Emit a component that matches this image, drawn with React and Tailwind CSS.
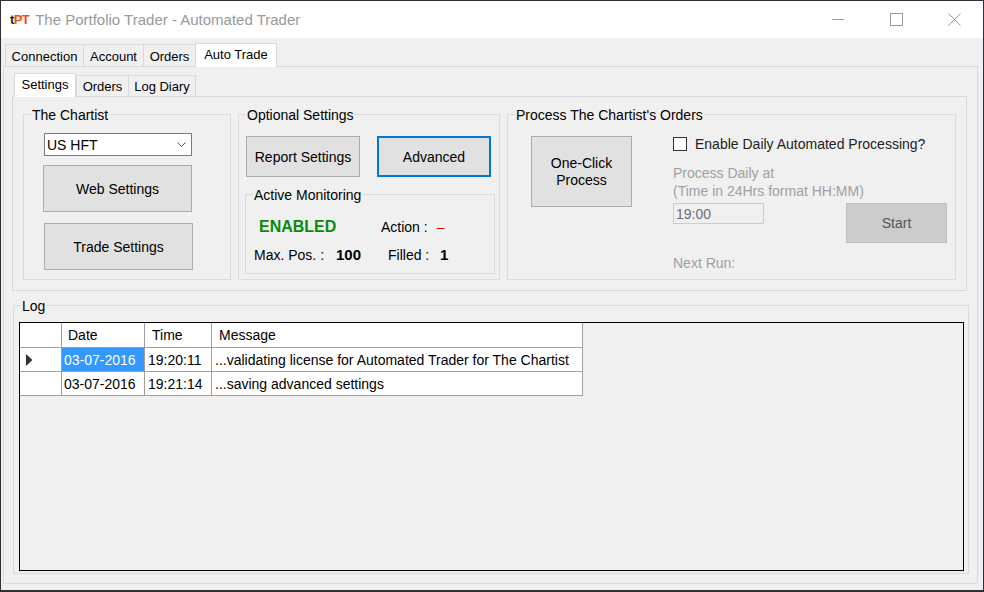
import React from 'react';

const GroupBox = ({ label, className = '', children }) => (
  <div className={`relative border border-[#dcdcdc] ${className}`}>
    <span className="absolute -top-[8px] left-[7px] bg-[#f0f0f0] px-[1px] leading-[16px] whitespace-nowrap">
      {label}
    </span>
    {children}
  </div>
);

const Button = ({ focused = false, className = '', children }) => (
  <div
    className={`flex items-center justify-center text-center leading-[17px] bg-[#e1e1e1] ${
      focused ? 'border-2 border-[#0078d7]' : 'border border-[#adadad]'
    } ${className}`}
  >
    {children}
  </div>
);

const TabStrip = ({ tabs, active, selectedH, normalH, className = '' }) => (
  <div className={`flex items-end text-[13px] ${className}`}>
    {tabs.map((tab) =>
      tab.label === active ? (
        <div
          key={tab.label}
          style={{ width: tab.w }}
          className={`relative z-10 -mb-px flex items-start justify-center pt-[3px] bg-white border border-b-0 border-[#d9d9d9] ${selectedH}`}
        >
          {tab.label}
        </div>
      ) : (
        <div
          key={tab.label}
          style={{ width: tab.w }}
          className={`flex items-center justify-center pt-[2px] bg-[#f0f0f0] border border-b-0 border-[#d9d9d9] -mr-px ${normalH}`}
        >
          {tab.label}
        </div>
      )
    )}
  </div>
);

const outerTabs = [
  { label: 'Connection', w: 79 },
  { label: 'Account', w: 61 },
  { label: 'Orders', w: 53 },
  { label: 'Auto Trade', w: 82 },
];

const innerTabs = [
  { label: 'Settings', w: 62 },
  { label: 'Orders', w: 53 },
  { label: 'Log Diary', w: 68 },
];

const logRows = [
  { date: '03-07-2016', time: '19:20:11', message: '...validating license for Automated Trader for The Chartist', current: true },
  { date: '03-07-2016', time: '19:21:14', message: '...saving advanced settings', current: false },
];

const cell = 'h-[24px] flex items-center border-r border-b border-[#a0a0a0] whitespace-nowrap overflow-hidden';

export default function App() {
  return (
    <div className="w-[984px] h-[592px] bg-[#2e2e33] pt-px px-px pb-[2px] font-['Liberation_Sans',Arial,sans-serif] text-[14px] leading-[16px] text-black">
      <div className="h-full flex flex-col bg-[#f0f0f0]">
        {/* title bar */}
        <div className="h-[37px] shrink-0 flex items-center bg-white">
          <div className="pl-[9px] text-[13px] font-bold tracking-[-0.6px]">
            <span className="text-[#222]">t</span>
            <span className="text-[#f0500a]">PT</span>
          </div>
          <div className="ml-[6px] text-[15px] text-[#999]">The Portfolio Trader - Automated Trader</div>
          <div className="ml-auto flex h-full">
            <div className="w-[58px] flex items-center justify-center">
              <svg width="12" height="12" viewBox="0 0 12 12">
                <path d="M0 5.5h12" stroke="#999" strokeWidth="1" />
              </svg>
            </div>
            <div className="w-[58px] flex items-center justify-center">
              <svg width="13" height="13" viewBox="0 0 13 13">
                <rect x="0.5" y="0.5" width="12" height="12" fill="none" stroke="#999" strokeWidth="1" />
              </svg>
            </div>
            <div className="w-[58px] flex items-center justify-center">
              <svg width="13" height="13" viewBox="0 0 13 13">
                <path d="M0.5 0.5L12.5 12.5M12.5 0.5L0.5 12.5" stroke="#999" strokeWidth="1" />
              </svg>
            </div>
          </div>
        </div>

        {/* outer tabs */}
        <div className="pl-[2px] pr-[5px] pt-[5px]">
          <TabStrip tabs={outerTabs} active="Auto Trade" selectedH="h-[24px]" normalH="h-[22px]" className="pl-[2px]" />
          <div className="h-[518px] flex flex-col border border-[#d9d9d9]">
            {/* inner tabs */}
            <TabStrip
              tabs={innerTabs}
              active="Settings"
              selectedH="h-[24px]"
              normalH="h-[21px]"
              className="pt-[6px] pl-[10px]"
            />
            <div className="ml-[8px] mr-[10px] h-[195px] border border-[#d9d9d9] flex gap-[7px] pt-[17px] px-[10px] pb-[10px]">
              {/* The Chartist */}
              <GroupBox label="The Chartist" className="w-[208px] flex flex-col">
                <div className="ml-[20px] mt-[18px] w-[148px] h-[23px] flex items-center justify-between bg-white border border-[#7a7a7a] pl-[2px] pr-[5px]">
                  <span>US HFT</span>
                  <svg width="9" height="6" viewBox="0 0 9 6">
                    <path d="M0.5 0.5L4.5 4.5L8.5 0.5" fill="none" stroke="#555" strokeWidth="1" />
                  </svg>
                </div>
                <Button className="ml-[19px] mt-[9px] w-[149px] h-[47px] pt-px">Web Settings</Button>
                <Button className="ml-[20px] mt-[11px] w-[149px] h-[47px] pt-px">Trade Settings</Button>
              </GroupBox>

              {/* Optional Settings */}
              <GroupBox label="Optional Settings" className="w-[262px] flex flex-col">
                <div className="ml-[7px] mt-[21px] flex gap-[17px]">
                  <Button className="w-[114px] h-[41px] pt-px">Report Settings</Button>
                  <Button focused className="w-[114px] h-[41px] pt-px">Advanced</Button>
                </div>
                <GroupBox label="Active Monitoring" className="ml-[6px] mt-[17px] w-[250px] h-[80px]">
                  <div className="mt-[23px] flex items-baseline">
                    <span className="w-[135px] pl-[13px] text-[16px] leading-[18px] font-bold text-[#0a8a0a]">ENABLED</span>
                    <span>Action :</span>
                    <span className="ml-[9px] text-[#e00000]">–</span>
                  </div>
                  <div className="mt-[11px] flex items-baseline">
                    <span className="w-[90px] pl-[8px]">Max. Pos. :</span>
                    <span className="w-[52px] text-[15px] font-bold">100</span>
                    <span className="w-[52px]">Filled :</span>
                    <span className="text-[15px] font-bold">1</span>
                  </div>
                </GroupBox>
              </GroupBox>

              {/* Process The Chartist's Orders */}
              <GroupBox label="Process The Chartist's Orders" className="w-[449px] flex">
                <Button className="ml-[23px] mt-[21px] w-[101px] h-[71px]">
                  One-Click
                  <br />
                  Process
                </Button>
                <div className="ml-[41px] mt-[21px] flex flex-col">
                  <div className="flex items-center h-[15px]">
                    <div className="w-[14px] h-[14px] bg-white border border-[#333]" />
                    <span className="ml-[8px] text-[#222]">Enable Daily Automated Processing?</span>
                  </div>
                  <div className="mt-[13px] leading-[18px] text-[#a0a0a0]">
                    Process Daily at
                    <br />
                    (Time in 24Hrs format HH:MM)
                  </div>
                  <div className="mt-[3px] flex items-start">
                    <div className="w-[91px] h-[21px] flex items-center pl-[2px] border border-[#cccccc] bg-[#f0f0f0] text-[#6d6d6d]">
                      19:00
                    </div>
                    <div className="ml-[82px] w-[101px] h-[40px] flex items-center justify-center border border-[#bfbfbf] bg-[#cccccc] text-[#555]">
                      Start
                    </div>
                  </div>
                  <div className="mt-[12px] text-[#a0a0a0]">Next Run:</div>
                </div>
              </GroupBox>
            </div>

            {/* Log */}
            <GroupBox label="Log" className="ml-[9px] mr-[8px] mt-[14px] mb-[9px] flex-1 flex flex-col pl-[5px] pr-[4px] pt-[16px] pb-[2px]">
              <div className="flex-1 border border-black bg-[#f0f0f0]">
                <div className="grid grid-cols-[42px_83px_67px_371px] w-max">
                  <div className="h-[25px] border-r border-b border-[#a0a0a0] bg-white" />
                  <div className="h-[25px] flex items-center pl-[6px] border-r border-b border-[#a0a0a0] bg-white">Date</div>
                  <div className="h-[25px] flex items-center pl-[7px] border-r border-b border-[#a0a0a0] bg-white">Time</div>
                  <div className="h-[25px] flex items-center pl-[7px] border-r border-b border-[#a0a0a0] bg-white">Message</div>
                  {logRows.map((row) => (
                    <React.Fragment key={row.time}>
                      <div className={`${cell} bg-white pl-[6px]`}>
                        {row.current && (
                          <svg width="7" height="12" viewBox="0 0 7 12">
                            <path d="M0 0L6.5 6L0 12Z" fill="#333" />
                          </svg>
                        )}
                      </div>
                      <div className={`${cell} pl-[2px] ${row.current ? 'bg-[#3399ff] text-white' : 'bg-white'}`}>{row.date}</div>
                      <div className={`${cell} bg-white pl-[3px]`}>{row.time}</div>
                      <div className={`${cell} bg-white pl-[3px]`}>{row.message}</div>
                    </React.Fragment>
                  ))}
                </div>
              </div>
            </GroupBox>
          </div>
        </div>
      </div>
    </div>
  );
}
